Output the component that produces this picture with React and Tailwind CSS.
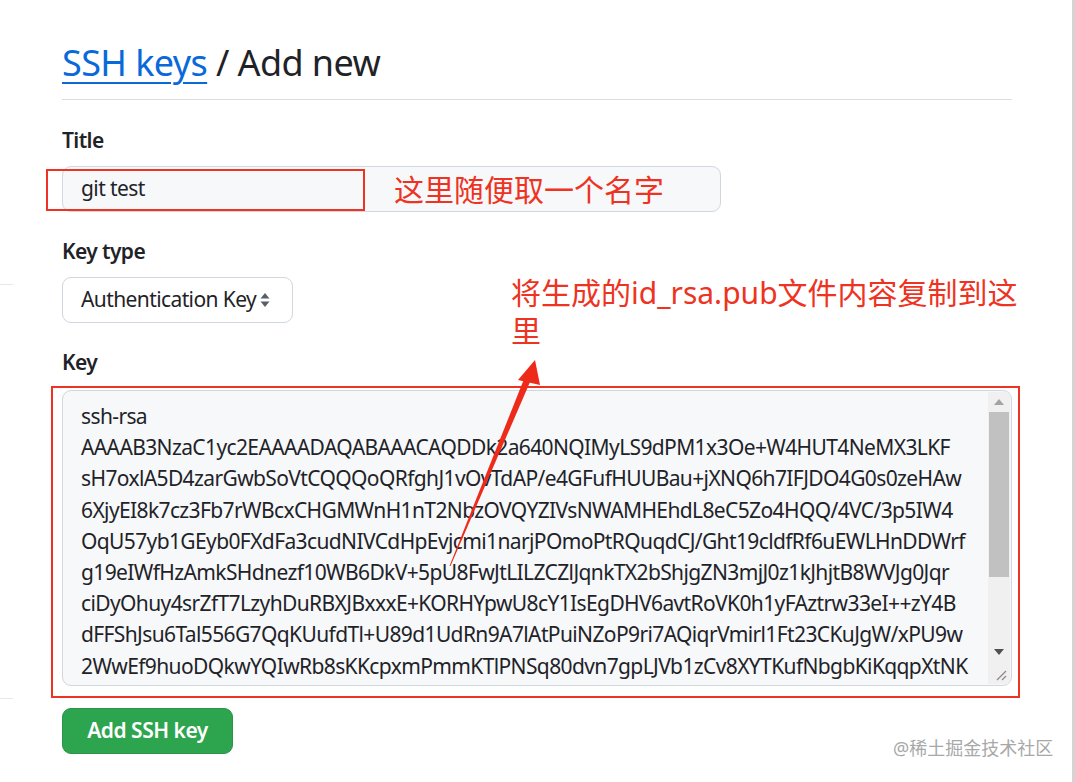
import React from "react";

const keyLines = [
  "ssh-rsa",
  "AAAAB3NzaC1yc2EAAAADAQABAAACAQDDk2a640NQIMyLS9dPM1x3Oe+W4HUT4NeMX3LKF",
  "sH7oxlA5D4zarGwbSoVtCQQQoQRfghJ1vOvTdAP/e4GFufHUUBau+jXNQ6h7IFJDO4G0s0zeHAw",
  "6XjyEI8k7cz3Fb7rWBcxCHGMWnH1nT2NbzOVQYZIVsNWAMHEhdL8eC5Zo4HQQ/4VC/3p5IW4",
  "OqU57yb1GEyb0FXdFa3cudNIVCdHpEvjcmi1narjPOmoPtRQuqdCJ/Ght19cldfRf6uEWLHnDDWrf",
  "g19eIWfHzAmkSHdnezf10WB6DkV+5pU8FwJtLILZCZlJqnkTX2bShjgZN3mjJ0z1kJhjtB8WVJg0Jqr",
  "ciDyOhuy4srZfT7LzyhDuRBXJBxxxE+KORHYpwU8cY1IsEgDHV6avtRoVK0h1yFAztrw33eI++zY4B",
  "dFFShJsu6Tal556G7QqKUufdTl+U89d1UdRn9A7lAtPuiNZoP9ri7AQiqrVmirl1Ft23CKuJgW/xPU9w",
  "2WwEf9huoDQkwYQIwRb8sKKcpxmPmmKTlPNSq80dvn7gpLJVb1zCv8XYTKufNbgbKiKqqpXtNK",
];

export default function App() {
  return (
    <div
      className="relative w-[1075px] h-[782px] overflow-hidden bg-white text-[#1f2328]"
      style={{ fontFamily: '"Noto Sans", "Open Sans", "Noto Sans CJK SC", sans-serif' }}
    >
      {/* right window edge */}
      <div className="absolute right-0 top-0 h-full w-[3px] bg-[#d4d4d4]" />
      {/* faint left fragments */}
      <div className="absolute left-0 top-[284px] h-px w-[13px] bg-[#e8e8e8]" />
      <div className="absolute left-0 top-[698px] h-px w-[13px] bg-[#e8e8e8]" />

      <div className="ml-[62px] w-[950px] pt-[40px]">
        <div className="border-b border-[#d8dee4] pb-[14px]">
          <h1 className="text-[36px] leading-[45px] font-normal tracking-[-0.6px]">
            <a className="text-[#0969da] underline decoration-[2px] underline-offset-[6px]">SSH keys</a>
            <span> / Add new</span>
          </h1>
        </div>

        <div className="mt-[25px] tracking-[-0.6px]">
          <div className="text-[21px] leading-[30px] font-semibold">Title</div>
          <div className="mt-[11px] flex h-[46px] w-[659px] items-center rounded-[9px] border border-[#d0d7de] bg-[#f6f8fa] px-[18px] text-[21px]">
            git test
          </div>
        </div>

        <div className="mt-[24px] tracking-[-0.6px]">
          <div className="text-[21px] leading-[30px] font-semibold">Key type</div>
          <div className="mt-[11px] flex h-[46px] w-[231px] items-center justify-between rounded-[9px] border border-[#d0d7de] bg-white pl-[18px] pr-[22px] text-[21px]">
            <span>Authentication Key</span>
            <svg width="10" height="16" viewBox="0 0 10 16">
              <path d="M5 1 L9.5 6.5 L0.5 6.5 Z" fill="#57606a" />
              <path d="M5 15 L9.5 9.5 L0.5 9.5 Z" fill="#57606a" />
            </svg>
          </div>
        </div>

        <div className="mt-[24px]">
          <div className="text-[21px] leading-[30px] font-semibold tracking-[-0.6px]">Key</div>
          <div className="relative mt-[13px] h-[296px] w-[950px] overflow-hidden rounded-[9px] border border-[#d0d7de] bg-[#f6f8fa]">
            <div className="pl-[18px] pt-[10px] text-[21px] leading-[31.2px] whitespace-pre tracking-[-0.62px]">
              {keyLines.map((l, i) => (
                <div key={i}>{l}</div>
              ))}
            </div>
            {/* scrollbar */}
            <div className="absolute right-px top-px bottom-px flex w-[22px] flex-col bg-[#f0f0f0]">
              <div className="flex h-[20px] items-center justify-center">
                <svg width="10" height="6" viewBox="0 0 10 6"><path d="M5 0 L10 6 L0 6 Z" fill="#a3a3a3" /></svg>
              </div>
              <div className="mx-[1px] h-[165px] bg-[#c1c1c1]" />
              <div className="flex-1" />
              <div className="flex h-[20px] items-center justify-center">
                <svg width="10" height="6" viewBox="0 0 10 6"><path d="M0 0 L10 0 L5 6 Z" fill="#505050" /></svg>
              </div>
              <div className="flex h-[22px] items-end justify-end bg-[#f0f0f0] pb-[3px] pr-[3px]">
                <svg width="12" height="12" viewBox="0 0 12 12">
                  <path d="M11 2 L2 11 M11 7 L7 11" stroke="#8a8a8a" strokeWidth="1.3" />
                </svg>
              </div>
            </div>
          </div>
        </div>

        <div className="mt-[22px]">
          <button className="flex h-[46px] w-[171px] items-center justify-center rounded-[9px] bg-[#2da44e] text-[21px] font-semibold tracking-[-0.5px] text-white border border-[#2a9447]">
            Add SSH key
          </button>
        </div>
      </div>

      {/* annotations */}
      <div className="absolute left-[46px] top-[169px] h-[42px] w-[319px] border-2 border-[#ee3322]" />
      <div className="absolute left-[394px] top-[170px] text-[30px] leading-[40px] text-[#ee3322]">这里随便取一个名字</div>
      <div className="absolute left-[511px] top-[274px] w-[520px] text-[30px] leading-[38px] text-[#ee3322]">
        将生成的id_rsa.pub文件内容复制到这<br />里
      </div>
      <div className="absolute left-[51px] top-[386px] h-[312px] w-[969px] border-2 border-[#ee3322]" />
      <svg className="absolute left-0 top-0" width="1075" height="782" viewBox="0 0 1075 782">
        <polygon points="449.5,566 450.5,566 530,382 524,379" fill="#ee2a1a" />
        <polygon points="535,360 518,380 540,385" fill="#ee2a1a" />
      </svg>

      <div className="absolute left-[893px] top-[736px] text-[18px] leading-[24px] text-[#a8a8a8]">@稀土掘金技术社区</div>
    </div>
  );
}
